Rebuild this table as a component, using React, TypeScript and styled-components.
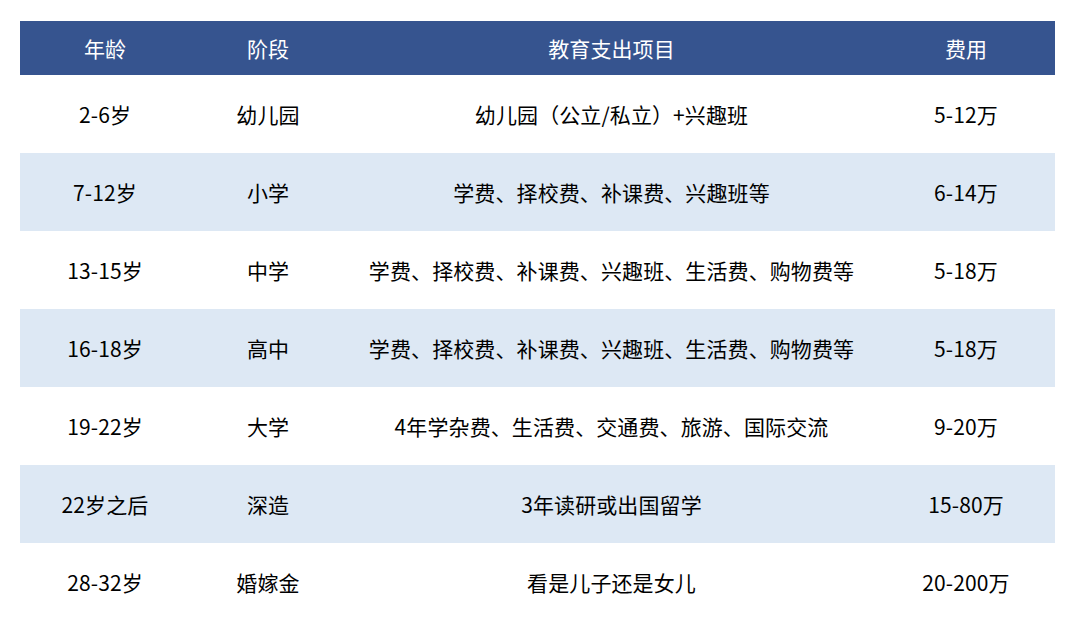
import { createGlobalStyle } from 'styled-components'
import styled from 'styled-components'

const GlobalStyle = createGlobalStyle`
  body {
    margin: 0;
    background: #ffffff;
    font-family: "Noto Sans CJK SC", "Noto Sans", sans-serif;
  }
`

const Page = styled.div`
  padding: 21px 25px 0 20px;
`

const Table = styled.table`
  width: 1035px;
  border-collapse: collapse;
  table-layout: fixed;
  font-size: 21px;
  letter-spacing: 0.1px;
`

const HeadCell = styled.th<{ w: number }>`
  width: ${p => p.w}px;
  height: 54px;
  padding: 0;
  background: #36548f;
  color: #ffffff;
  font-weight: 400;
  text-align: center;
`

const Row = styled.tr<{ shaded: boolean }>`
  background: ${p => (p.shaded ? '#dde8f4' : '#ffffff')};
`

const Cell = styled.td`
  height: 78px;
  padding: 0;
  color: #000000;
  text-align: center;
  white-space: nowrap;
`

const columns = [
  { title: '年龄', width: 170 },
  { title: '阶段', width: 156 },
  { title: '教育支出项目', width: 531 },
  { title: '费用', width: 178 },
]

const rows = [
  ['2-6岁', '幼儿园', '幼儿园（公立/私立）+兴趣班', '5-12万'],
  ['7-12岁', '小学', '学费、择校费、补课费、兴趣班等', '6-14万'],
  ['13-15岁', '中学', '学费、择校费、补课费、兴趣班、生活费、购物费等', '5-18万'],
  ['16-18岁', '高中', '学费、择校费、补课费、兴趣班、生活费、购物费等', '5-18万'],
  ['19-22岁', '大学', '4年学杂费、生活费、交通费、旅游、国际交流', '9-20万'],
  ['22岁之后', '深造', '3年读研或出国留学', '15-80万'],
  ['28-32岁', '婚嫁金', '看是儿子还是女儿', '20-200万'],
]

const App = () => {
  return (
    <>
      <GlobalStyle />
      <Page>
        <Table>
          <thead>
            <tr>
              {columns.map(c => (
                <HeadCell key={c.title} w={c.width}>{c.title}</HeadCell>
              ))}
            </tr>
          </thead>
          <tbody>
            {rows.map((r, i) => (
              <Row key={i} shaded={i % 2 === 1}>
                {r.map((v, j) => (
                  <Cell key={j}>{v}</Cell>
                ))}
              </Row>
            ))}
          </tbody>
        </Table>
      </Page>
    </>
  )
}

export default App
